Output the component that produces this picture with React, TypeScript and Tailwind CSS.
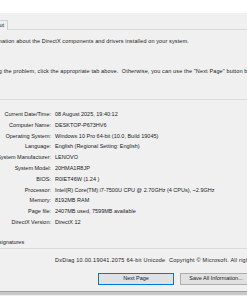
import React from 'react';

// DxDiag "System" tab, cropped view
const rows: [string, string][] = [
  ['Current Date/Time:', '08 August 2025, 19:40:12'],
  ['Computer Name:', 'DESKTOP-P673HV6'],
  ['Operating System:', 'Windows 10 Pro 64-bit (10.0, Build 19045)'],
  ['Language:', 'English (Regional Setting: English)'],
  ['System Manufacturer:', 'LENOVO'],
  ['System Model:', '20HMA1R8JP'],
  ['BIOS:', 'R0IET46W (1.24 )'],
  ['Processor:', 'Intel(R) Core(TM) i7-7500U CPU @ 2.70GHz (4 CPUs), ~2.9GHz'],
  ['Memory:', '8192MB RAM'],
  ['Page file:', '2407MB used, 7599MB available'],
  ['DirectX Version:', 'DirectX 12'],
];

export default function App() {
  return (
    <div className="w-[247px] h-[296px] overflow-hidden bg-[#f0f0f0] text-[#1a1a1a] text-[5.5px] leading-none [font-family:'Liberation_Sans',Arial,sans-serif]">
      {/* title bar */}
      <div className="h-[13px] bg-white" />

      {/* tab strip */}
      <div className="h-[17px] flex items-end border-b border-[#d9d9d9]">
        <div className="h-[10px] w-[24px] -ml-[16px] -mb-px bg-[#f0f0f0] border border-b-0 border-[#d0d0d0] flex items-center justify-end pr-[3px]">
          Input
        </div>
      </div>

      {/* tab page */}
      <div className="h-[219px] pt-[2px] flex flex-col border-b border-[#dadada]">
        <div className="h-[20px] flex items-center whitespace-nowrap tracking-[0.12px] -ml-[79px]">
          This tool reports detailed information about the DirectX components and drivers installed on your system.
        </div>
        <div className="h-[40px] flex items-center whitespace-nowrap tracking-[0.14px] -ml-[82px]">
          If you know what area is causing the problem, click the appropriate tab above.&nbsp; Otherwise, you can use the "Next Page" button below to visit each page in sequence.
        </div>

        {/* System Information group */}
        <div className="mt-[8px] border-t border-[#dcdcdc] pt-[9px] flex flex-col">
          {rows.map(([k, v]) => (
            <div key={k} className="h-[10.8px] flex items-center whitespace-nowrap">
              <div className="w-[100px] -ml-[49px] shrink-0 text-right">{k}</div>
              <div className="ml-[4px]">{v}</div>
            </div>
          ))}
        </div>

        <div className="mt-[10px] h-[10px] flex items-center whitespace-nowrap -ml-[60px]">
          Check for WHQL digital signatures
        </div>
      </div>

      {/* footer */}
      <div className="h-[24px] flex items-center whitespace-nowrap tracking-[0.25px] pl-[55px]">
        DxDiag 10.00.19041.2075 64-bit Unicode&nbsp; Copyright © Microsoft. All rights reserved.
      </div>

      <div className="h-[12px] flex gap-[6px] pl-[98px] whitespace-nowrap">
        <button className="w-[76px] h-[12px] shrink-0 bg-[#e1e1e1] border border-[#0078d7] flex items-center justify-center">
          Next Page
        </button>
        <button className="w-[72px] h-[12px] shrink-0 bg-[#e1e1e1] border border-[#adadad] flex items-center justify-center">
          Save All Information...
        </button>
      </div>

      <div className="mt-[6px] h-[4px] bg-[#c8c8c8] border-t border-[#a0a0a0]" />
    </div>
  );
}
